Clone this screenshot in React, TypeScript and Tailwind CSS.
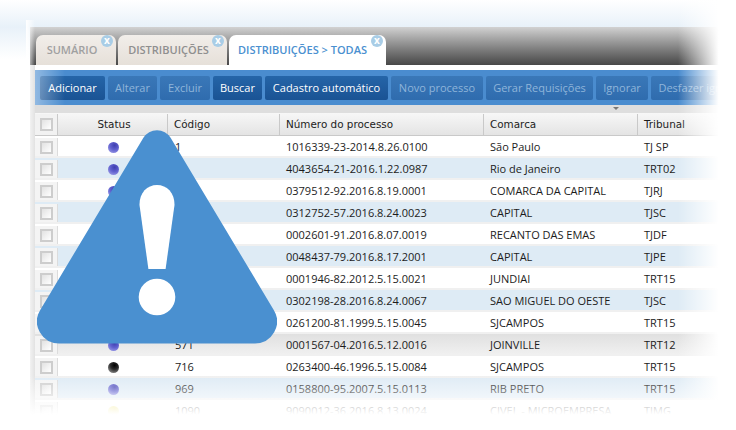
import React from 'react';

const tabs = [
  { label: 'SUMÁRIO', cls: 'w-[80px] mr-[2px] pr-[8px] bg-gradient-to-b from-[#f2eeea] to-[#e6e0d9] text-[#a0a0a0]' },
  { label: 'DISTRIBUIÇÕES', cls: 'w-[109px] mr-[2px] pr-[8px] bg-gradient-to-b from-[#f2eeea] to-[#e6e0d9] text-[#8f8f8f]' },
  { label: 'DISTRIBUIÇÕES > TODAS', cls: 'w-[157px] pr-[10px] bg-white text-[#4a90d0]' },
];

const buttons = [
  { label: 'Adicionar', on: true, w: 'w-[65px]' },
  { label: 'Alterar', on: false, w: 'w-[49px]' },
  { label: 'Excluir', on: false, w: 'w-[50px]' },
  { label: 'Buscar', on: true, w: 'w-[49px]' },
  { label: 'Cadastro automático', on: true, w: 'w-[123px]' },
  { label: 'Novo processo', on: false, w: 'w-[92px]' },
  { label: 'Gerar Requisições', on: false, w: 'w-[107px]' },
  { label: 'Ignorar', on: false, w: 'w-[52px]' },
  { label: 'Desfazer ignorar', on: false, w: 'w-[100px]' },
];

const rows = [
  { ball: 'b', code: '1', num: '1016339-23-2014.8.26.0100', com: 'São Paulo', tri: 'TJ SP', bg: 'bg-white' },
  { ball: 'b', code: '', num: '4043654-21-2016.1.22.0987', com: 'Rio de Janeiro', tri: 'TRT02', bg: 'bg-[#deebf5]' },
  { ball: 'b', code: '', num: '0379512-92.2016.8.19.0001', com: 'COMARCA DA CAPITAL', tri: 'TJRJ', bg: 'bg-white' },
  { ball: '', code: '', num: '0312752-57.2016.8.24.0023', com: 'CAPITAL', tri: 'TJSC', bg: 'bg-[#deebf5]' },
  { ball: '', code: '', num: '0002601-91.2016.8.07.0019', com: 'RECANTO DAS EMAS', tri: 'TJDF', bg: 'bg-white' },
  { ball: '', code: '', num: '0048437-79.2016.8.17.2001', com: 'CAPITAL', tri: 'TJPE', bg: 'bg-[#deebf5]' },
  { ball: '', code: '', num: '0001946-82.2012.5.15.0021', com: 'JUNDIAI', tri: 'TRT15', bg: 'bg-white' },
  { ball: '', code: '', num: '0302198-28.2016.8.24.0067', com: 'SAO MIGUEL DO OESTE', tri: 'TJSC', bg: 'bg-[#deebf5]' },
  { ball: '', code: '', num: '0261200-81.1999.5.15.0045', com: 'SJCAMPOS', tri: 'TRT15', bg: 'bg-white' },
  { ball: 'b', code: '571', num: '0001567-04.2016.5.12.0016', com: 'JOINVILLE', tri: 'TRT12', bg: 'bg-gradient-to-b from-[#e0e0e0] to-[#f0f0f0]' },
  { ball: 'k', code: '716', num: '0263400-46.1996.5.15.0084', com: 'SJCAMPOS', tri: 'TRT15', bg: 'bg-white' },
  { ball: 'b', code: '969', num: '0158800-95.2007.5.15.0113', com: 'RIB PRETO', tri: 'TRT15', bg: 'bg-[#deebf5]' },
  { ball: 'y', code: '1090', num: '9090012-36.2016.8.13.0024', com: 'CIVEL - MICROEMPRESA', tri: 'TJMG', bg: 'bg-white' },
];

const Ball = ({ kind }: { kind: string }) => {
  if (kind === 'b') return <span className="block w-[11px] h-[11px] rounded-full bg-[radial-gradient(circle_at_60%_30%,#3f3fb0_0%,#6262cf_45%,#b0b0f0_100%)]" />;
  if (kind === 'k') return <span className="block w-[11px] h-[11px] rounded-full bg-[radial-gradient(circle_at_60%_30%,#000_0%,#2a2a2a_40%,#b5b5b5_100%)]" />;
  if (kind === 'y') return <span className="block w-[11px] h-[11px] rounded-full bg-[radial-gradient(circle_at_60%_30%,#e8d84a_0%,#f0e46a_45%,#fbf5b0_100%)]" />;
  return null;
};

const Check = () => <span className="block w-[13px] h-[13px] border-2 border-[#cdcdcd] bg-gradient-to-br from-[#e2e2e2] to-white" />;

const CloseDot = () => (
  <span className="absolute top-0 right-[3px] w-[12px] h-[12px] rounded-full bg-[#a9cde6] text-white text-[10px] leading-[10px] text-center font-bold">x</span>
);

export default function App() {
  return (
    <div className="relative w-[736px] h-[430px] overflow-hidden bg-white pl-[30px] pt-[27px] font-['Open_Sans','Noto_Sans',sans-serif] text-[11px] text-[#1c1c1c]">
      <div className="w-[706px] h-[403px] pl-[5px] bg-[#e2e2e2] flex flex-col">
        <div className="h-[38px] shrink-0 -ml-[5px] pl-[6px] pt-[8px] flex items-stretch bg-gradient-to-b from-[#d2d2d2] to-[#484848]">
          {tabs.map((t) => (
            <div key={t.label} className={`relative rounded-t-[7px] pt-[1px] flex items-center justify-center font-semibold text-[11px] ${t.cls}`}>
              {t.label}
              <CloseDot />
            </div>
          ))}
        </div>
        <div className="h-[5px] shrink-0 bg-white" />
        <div className="h-[35px] shrink-0 bg-[#4a8ccf] flex items-center gap-[3px] pl-[5px] pt-[1px] overflow-hidden">
          {buttons.map((b) => (
            <div
              key={b.label}
              className={`${b.w} shrink-0 h-[24px] rounded-[2px] flex items-center justify-center whitespace-nowrap overflow-hidden ${b.on ? 'bg-gradient-to-b from-[#2565a8] to-[#1a5394] text-white' : 'bg-gradient-to-b from-[#3a78b8] to-[#2f6cae] text-[#8fb5da]'}`}
            >
              {b.label}
            </div>
          ))}
        </div>
        <div className="relative h-[8px] shrink-0 bg-[#dedede]">
          <div className="absolute left-[578px] top-[2px] w-0 h-0 border-x-[3px] border-x-transparent border-t-[3px] border-t-[#777]" />
        </div>
        <div className="h-[23px] shrink-0 pt-[1px] bg-gradient-to-b from-[#f7f7f7] to-[#e4e4e4] border-b border-[#c9c9c9] flex font-['DejaVu_Sans'] text-[10.4px]">
          <div className="w-[23px] shrink-0 flex items-center justify-center border-r border-[#c9c9c9] bg-[#f2f2f2]"><Check /></div>
          <div className="w-[110px] shrink-0 flex items-center justify-center pl-[3px] border-r border-[#c9c9c9]">Status</div>
          <div className="w-[112px] shrink-0 flex items-center pl-[6px] border-r border-[#c9c9c9]">Código</div>
          <div className="w-[204px] shrink-0 flex items-center pl-[6px] border-r border-[#c9c9c9]">Número do processo</div>
          <div className="w-[154px] shrink-0 flex items-center pl-[6px] border-r border-[#c9c9c9]">Comarca</div>
          <div className="flex-1 flex items-center pl-[6px]">Tribunal</div>
        </div>
        <div className="flex flex-col">
          {rows.map((r) => (
            <div key={r.num} className={`h-[22px] shrink-0 pt-[2px] flex items-center border-b-2 border-[#f0f0f0] ${r.bg}`}>
              <div className="w-[23px] shrink-0 flex items-center justify-center bg-[#f4f4f4] self-stretch border-r border-[#dcdcdc]"><Check /></div>
              <div className="w-[110px] shrink-0 flex justify-center"><Ball kind={r.ball} /></div>
              <div className="w-[112px] shrink-0 pl-[7px]">{r.code}</div>
              <div className="w-[204px] shrink-0 pl-[6px]">{r.num}</div>
              <div className="w-[154px] shrink-0 pl-[6px]">{r.com}</div>
              <div className="flex-1 pl-[6px]">{r.tri}</div>
            </div>
          ))}
        </div>
      </div>

      {/* fades round the cropped window */}
      <div className="absolute left-0 right-0 top-0 h-[27px] bg-gradient-to-b from-white to-[#e8f1f9]" />
      <div className="absolute left-0 top-[27px] w-[30px] h-[32px] bg-gradient-to-b from-[#e8f1f9] to-white" />
      <div className="absolute left-[26px] top-[20px] bottom-0 w-[9px] bg-gradient-to-r from-white to-transparent" />
      <div className="absolute left-[35px] top-[70px] w-[30px] h-[35px] bg-gradient-to-r from-[#ffffff66] to-transparent" />
      <div className="absolute right-0 top-0 bottom-0 w-[58px] bg-gradient-to-r from-transparent to-white to-[70%]" />
      <div className="absolute left-0 right-0 bottom-0 h-[55px] bg-gradient-to-b from-transparent to-white to-[72%]" />

      <svg className="absolute left-[37px] top-[130px] w-[240px] h-[214px]" viewBox="0 0 240 214">
        <path d="M106.4 7.8A15.9 15.9 0 0 1 133.6 7.8L236.9 180.2A22 22 0 0 1 218 213.5L22 213.5A22 22 0 0 1 3.1 180.2Z" fill="#4a90d0" />
        <path d="M120 55C110 55 102.3 63 102.5 75L111.4 139L128.6 139L137.5 75C137.7 63 130 55 120 55Z" fill="#fff" />
        <circle cx="120" cy="167" r="18.3" fill="#fff" />
      </svg>
    </div>
  );
}
